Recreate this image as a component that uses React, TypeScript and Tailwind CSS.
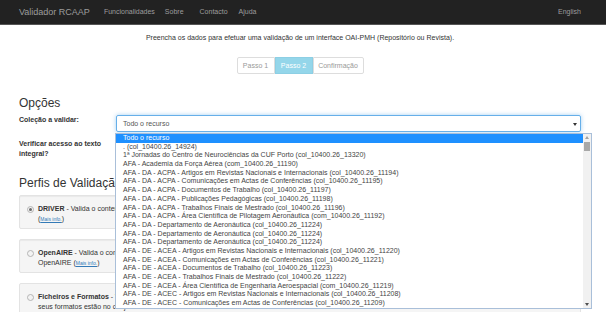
import { useState } from "react";

const links = [
  { label: "Funcionalidades", ml: "ml-[14px]" },
  { label: "Sobre", ml: "ml-[10px]" },
  { label: "Contacto", ml: "ml-[16px]" },
  { label: "Ajuda", ml: "ml-[11px]" },
];

const options = [
  "Todo o recurso",
  ". (col_10400.26_14924)",
  "1ª Jornadas do Centro de Neurociências da CUF Porto (col_10400.26_13320)",
  "AFA - Academia da Força Aérea (com_10400.26_11190)",
  "AFA - DA - ACPA - Artigos em Revistas Nacionais e Internacionais (col_10400.26_11194)",
  "AFA - DA - ACPA - Comunicações em Actas de Conferências (col_10400.26_11195)",
  "AFA - DA - ACPA - Documentos de Trabalho (col_10400.26_11197)",
  "AFA - DA - ACPA - Publicações Pedagógicas (col_10400.26_11198)",
  "AFA - DA - ACPA - Trabalhos Finais de Mestrado (col_10400.26_11196)",
  "AFA - DA - ACPA - Área Científica de Pilotagem Aeronáutica (com_10400.26_11192)",
  "AFA - DA - Departamento de Aeronáutica (col_10400.26_11224)",
  "AFA - DA - Departamento de Aeronáutica (col_10400.26_11224)",
  "AFA - DA - Departamento de Aeronáutica (col_10400.26_11224)",
  "AFA - DE - ACEA - Artigos em Revistas Nacionais e Internacionais (col_10400.26_11220)",
  "AFA - DE - ACEA - Comunicações em Actas de Conferências (col_10400.26_11221)",
  "AFA - DE - ACEA - Documentos de Trabalho (col_10400.26_11223)",
  "AFA - DE - ACEA - Trabalhos Finais de Mestrado (col_10400.26_11222)",
  "AFA - DE - ACEA - Área Científica de Engenharia Aeroespacial (com_10400.26_11219)",
  "AFA - DE - ACEC - Artigos em Revistas Nacionais e Internacionais (col_10400.26_11208)",
  "AFA - DE - ACEC - Comunicações em Actas de Conferências (col_10400.26_11209)",
];

const profiles = [
  {
    name: "DRIVER",
    text: "Valida o conteúdo do repositório de acordo com as Diretrizes DRIVER para fornecedores de conteúdos",
    pre: "",
    checked: true,
  },
  {
    name: "OpenAIRE",
    text: "Valida o conteúdo do repositório de acordo com as Diretrizes para gestores de repositórios de literatura do",
    pre: "OpenAIRE ",
    checked: false,
  },
];

function Radio({ checked }: { checked: boolean }) {
  return (
    <span className="mt-[2px] flex h-[7px] w-[7px] shrink-0 items-center justify-center rounded-full border border-[#b5b5b5] bg-[#f3f3f3]">
      {checked && <span className="h-[3px] w-[3px] rounded-full bg-[#6b6b6b]" />}
    </span>
  );
}

function MoreInfo() {
  return (
    <span>
      (<span className="text-[5px] text-[#337ab7] underline">Mais info.</span>)
    </span>
  );
}

export default function App() {
  const [selected] = useState(0);

  return (
    <div className="relative h-[312px] w-[606px] overflow-hidden bg-white font-['Liberation_Sans',Arial,sans-serif] text-[7px] leading-[10px] text-[#333]">
      <nav className="flex h-[25px] items-center border-b border-[#555] bg-[#222] pl-[19px] pr-[25px] text-[#9d9d9d]">
        <span className="text-[9px]">Validador RCAAP</span>
        {links.map((l) => (
          <span key={l.label} className={l.ml}>
            {l.label}
          </span>
        ))}
        <span className="ml-auto">English</span>
      </nav>

      <main className="w-[600px] px-[19px]">
        <p className="mt-[8px] text-center">
          Preencha os dados para efetuar uma validação de um interface OAI-PMH (Repositório ou Revista).
        </p>

        <div className="mt-[14px] flex justify-center">
          <div className="flex h-[17px] text-[#999]">
            <span className="flex w-[38px] items-center justify-center rounded-l-[2px] border border-[#ddd]">Passo 1</span>
            <span className="flex w-[38px] items-center justify-center border border-[#8dcfe4] bg-[#94d6ea] text-white">Passo 2</span>
            <span className="flex w-[51px] items-center justify-center rounded-r-[2px] border border-[#ddd]">Confirmação</span>
          </div>
        </div>

        <h3 className="mt-[23px] text-[12px] leading-[13px]">Opções</h3>

        <div className="mt-[5px] flex items-start">
          <label className="w-[89px] shrink-0 font-bold">Coleção a validar:</label>
          <div className="relative ml-[8px] flex h-[17px] flex-1 items-center rounded-[2px] border border-[#66afe9] pl-[6px] text-[#555] shadow-[0_0_4px_rgba(102,175,233,0.6)]">
            {options[selected]}
            <svg className="absolute right-[3px] top-[7px]" width="4" height="3" viewBox="0 0 4 3">
              <path d="M0 0h4L2 3z" fill="#333" />
            </svg>
          </div>
        </div>

        <div className="mt-[7px] flex items-start">
          <label className="w-[89px] shrink-0 font-bold">Verificar acesso ao texto integral?</label>
          <div className="ml-[8px] pt-[2px]">
            <input type="checkbox" className="h-[7px] w-[7px]" />
          </div>
        </div>

        <h3 className="mt-[18px] text-[12px] leading-[13px]">Perfis de Validação</h3>

        <div className="mt-[5px] flex flex-col gap-[10px]">
          {profiles.map((p) => (
            <div
              key={p.name}
              className="flex h-[34px] gap-[4px] rounded-[2px] border border-[#e3e3e3] bg-[#f5f5f5] pl-[7px] pt-[8px] shadow-[inset_0_1px_1px_rgba(0,0,0,0.05)]"
            >
              <Radio checked={p.checked} />
              <div>
                <div>
                  <b>{p.name}</b> - {p.text}
                </div>
                <div>
                  {p.pre}
                  <MoreInfo />
                </div>
              </div>
            </div>
          ))}
          <div className="flex h-[34px] gap-[4px] rounded-[2px] border border-[#e3e3e3] bg-[#f5f5f5] pl-[7px] pt-[8px]">
            <Radio checked={false} />
            <div>
              <div>
                <b>Ficheiros e Formatos</b> - Valida se os ficheiros depositados estão acessíveis e se os
              </div>
              <div>seus formatos estão no conjunto de formatos recomendados</div>
            </div>
          </div>
        </div>
      </main>

      {/* open select popup */}
      <div className="absolute left-[115px] top-[133px] flex h-[176px] w-[477px] border border-[#a9bfd9] bg-white">
        <ul className="flex-1">
          {options.map((o, i) => (
            <li
              key={i}
              className={`h-[8.7px] whitespace-nowrap pl-[7px] leading-[8.7px] ${
                i === selected ? "bg-[#1e90ff] text-white" : "text-[#444]"
              }`}
            >
              {o}
            </li>
          ))}
        </ul>
        <div className="relative w-[8px] bg-[#f1f1f1]">
          <svg className="absolute left-[2px] top-[2px]" width="4" height="3" viewBox="0 0 4 3">
            <path d="M2 0l2 3H0z" fill="#a3a3a3" />
          </svg>
          <div className="absolute left-[1px] top-[8px] h-[9px] w-[6px] bg-[#a8a8a8]" />
          <svg className="absolute bottom-[2px] left-[2px]" width="4" height="3" viewBox="0 0 4 3">
            <path d="M0 0h4L2 3z" fill="#505050" />
          </svg>
        </div>
      </div>
    </div>
  );
}
